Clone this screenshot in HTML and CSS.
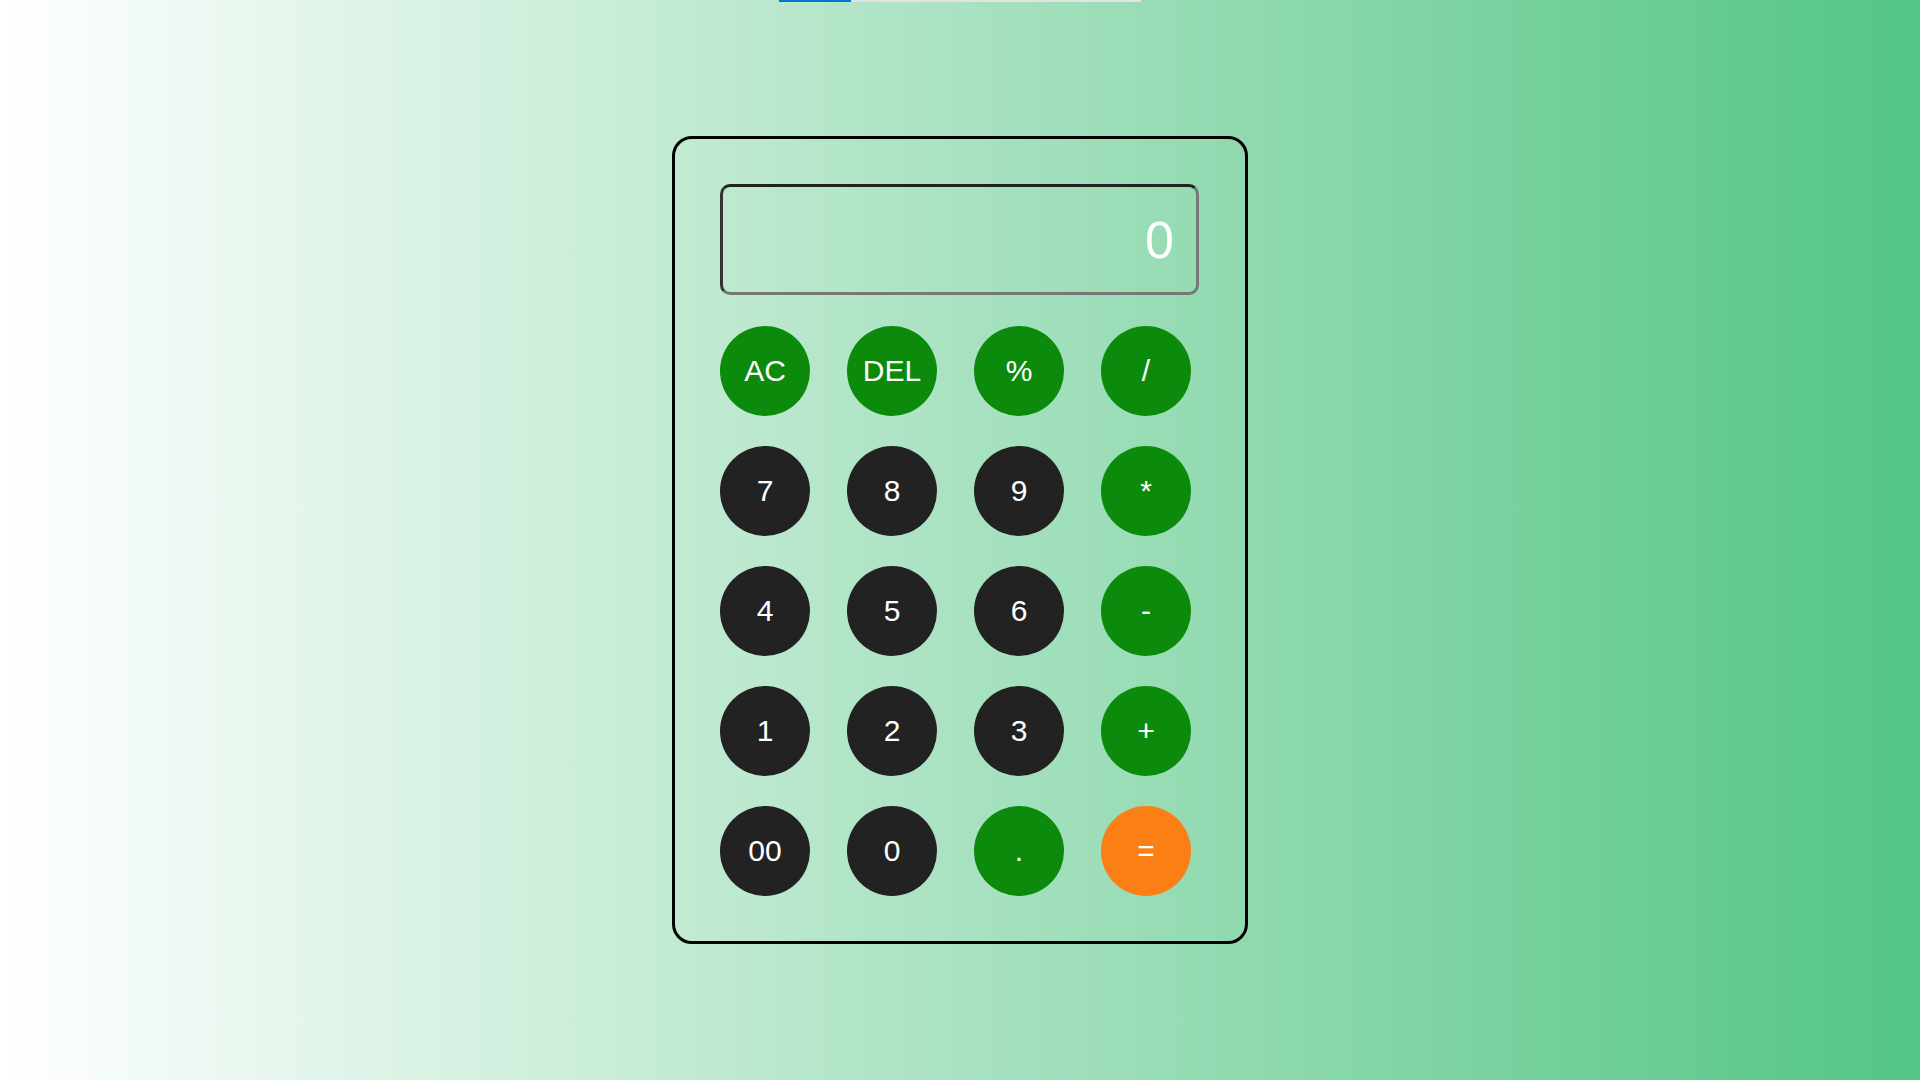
FILE: index.html
```html
<!DOCTYPE html>
<html lang="en">
<head>
<meta charset="utf-8">
<title>Calculator</title>
<link rel="stylesheet" href="styles.css">
</head>
<body>
<div class="loader"><div class="loader-fill"></div></div>
<main class="page">
  <div class="calculator">
    <div class="display">0</div>
    <div class="keys">
      <button class="key op">AC</button>
      <button class="key op">DEL</button>
      <button class="key op">%</button>
      <button class="key op">/</button>
      <button class="key num">7</button>
      <button class="key num">8</button>
      <button class="key num">9</button>
      <button class="key op">*</button>
      <button class="key num">4</button>
      <button class="key num">5</button>
      <button class="key num">6</button>
      <button class="key op">-</button>
      <button class="key num">1</button>
      <button class="key num">2</button>
      <button class="key num">3</button>
      <button class="key op">+</button>
      <button class="key num">00</button>
      <button class="key num">0</button>
      <button class="key op">.</button>
      <button class="key eq">=</button>
    </div>
  </div>
</main>
</body>
</html>
```

FILE: styles.css
```css
html, body {
  margin: 0;
  padding: 0;
  height: 100%;
}

body {
  font-family: "Liberation Sans", Arial, sans-serif;
  background: linear-gradient(to right, #ffffff 0%, #53c584 100%);
  overflow: hidden;
}

.loader {
  position: absolute;
  top: 0;
  left: 779px;
  width: 362px;
  height: 2px;
  background: #e3e3e3;
}

.loader-fill {
  width: 72px;
  height: 100%;
  background: #0078d4;
}

.page {
  height: 100%;
  display: flex;
  align-items: center;
  justify-content: center;
}

.calculator {
  box-sizing: border-box;
  width: 576px;
  padding: 45px 46px 45px 45px;
  border: 3px solid #000;
  border-radius: 20px;
}

.display {
  box-sizing: border-box;
  height: 111px;
  border: 3px solid #777;
  border-top-color: #222;
  border-left-color: #333;
  border-radius: 10px;
  display: flex;
  align-items: center;
  justify-content: flex-end;
  padding-right: 22px;
  color: #fff;
  font-size: 52px;
}

.keys {
  margin-top: 31px;
  display: grid;
  grid-template-columns: repeat(4, 90px);
  column-gap: 37px;
  row-gap: 30px;
}

.key {
  width: 90px;
  height: 90px;
  border: none;
  border-radius: 50%;
  padding: 0;
  color: #fff;
  font-family: "Liberation Sans", Arial, sans-serif;
  font-size: 30px;
  line-height: 1;
}

.num {
  background: #222222;
}

.op {
  background: #0c8a0c;
}

.eq {
  background: #fc7f16;
}
```
